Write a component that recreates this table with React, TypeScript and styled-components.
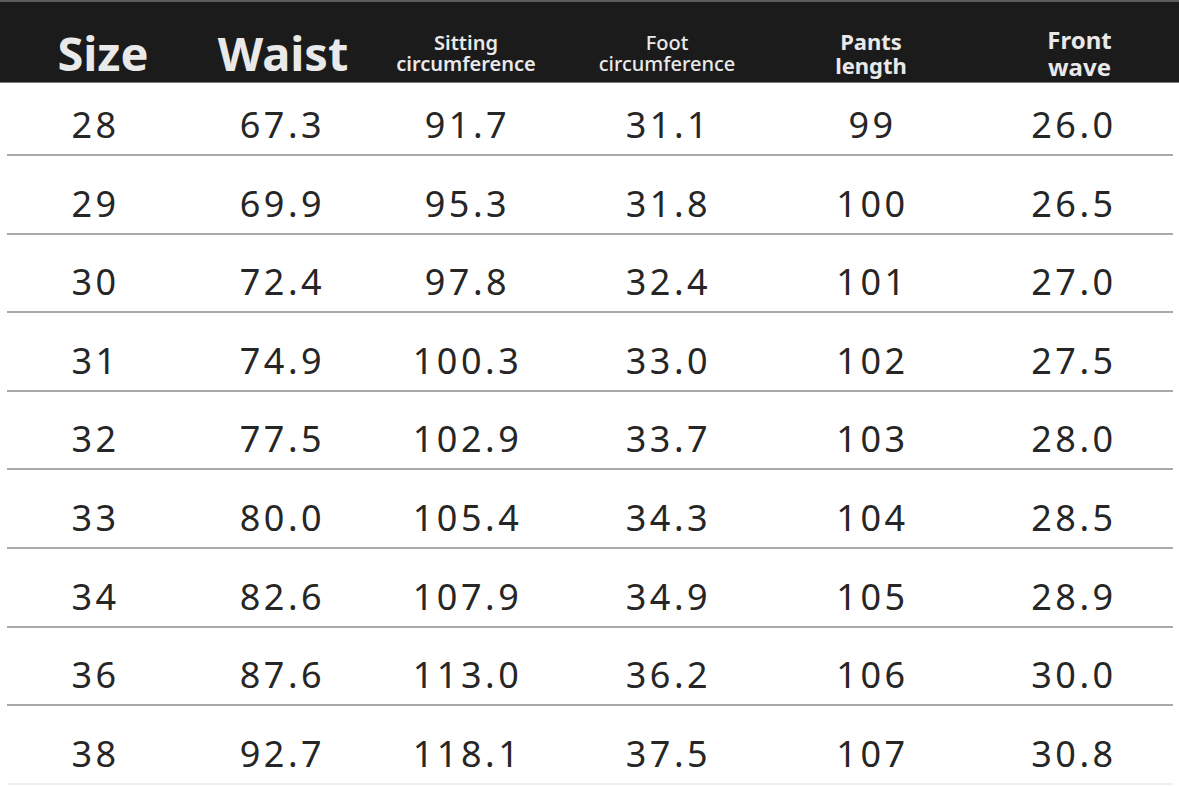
import React from 'react';
import styled, { createGlobalStyle } from 'styled-components';

const GlobalStyle = createGlobalStyle`
  html, body {
    margin: 0;
    padding: 0;
    background: #ffffff;
  }
  body {
    font-family: "Noto Sans", "Open Sans", sans-serif;
  }
`;

const COLUMNS = '188px 186px 184px 218px 190px 1fr';

const Chart = styled.div`
  width: 1179px;
  height: 786px;
  display: flex;
  flex-direction: column;
  overflow: hidden;
`;

const Header = styled.div`
  display: grid;
  grid-template-columns: ${COLUMNS};
  align-items: center;
  box-sizing: border-box;
  height: 83px;
  padding-top: 21px;
  background: #1b1b1b;
  border-top: 2px solid #5c5c5c;
  border-bottom: 1px solid #7a7a7a;
  color: #e9e9e9;
`;

const HeadCell = styled.div<{ $size: number; $lh: number; $weight: number; $shift?: number }>`
  text-align: center;
  font-size: ${(p) => p.$size}px;
  line-height: ${(p) => p.$lh}px;
  font-weight: ${(p) => p.$weight};
  transform: translateX(${(p) => p.$shift ?? 0}px);
`;

const Body = styled.div`
  display: flex;
  flex-direction: column;
`;

const Row = styled.div`
  display: flex;
  flex-direction: column;
  height: 78.6px;

  &:first-child {
    height: 73px;
  }
`;

const Cells = styled.div`
  flex: 1;
  display: grid;
  grid-template-columns: ${COLUMNS};
  align-items: end;
  padding-bottom: 11px;
`;

const Value = styled.div`
  text-align: center;
  padding-left: 3px;
  font-size: 36px;
  line-height: 36px;
  letter-spacing: 3.5px;
  color: #262626;
`;

const Rule = styled.div<{ $faint?: boolean }>`
  height: 2px;
  margin: 0 6px 0 7px;
  background: ${(p) => (p.$faint ? '#efefef' : '#a9a9a9')};
`;

const rows: string[][] = [
  ['28', '67.3', '91.7', '31.1', '99', '26.0'],
  ['29', '69.9', '95.3', '31.8', '100', '26.5'],
  ['30', '72.4', '97.8', '32.4', '101', '27.0'],
  ['31', '74.9', '100.3', '33.0', '102', '27.5'],
  ['32', '77.5', '102.9', '33.7', '103', '28.0'],
  ['33', '80.0', '105.4', '34.3', '104', '28.5'],
  ['34', '82.6', '107.9', '34.9', '105', '28.9'],
  ['36', '87.6', '113.0', '36.2', '106', '30.0'],
  ['38', '92.7', '118.1', '37.5', '107', '30.8'],
];

export default function App(): JSX.Element {
  return (
    <>
      <GlobalStyle />
      <Chart>
        <Header>
          <HeadCell $size={47} $lh={50} $weight={700} $shift={9}>Size</HeadCell>
          <HeadCell $size={47} $lh={50} $weight={700} $shift={2}>Waist</HeadCell>
          <HeadCell $size={20} $lh={21} $weight={600}>
            Sitting<br />circumference
          </HeadCell>
          <HeadCell $size={20} $lh={21} $weight={500}>
            Foot<br />circumference
          </HeadCell>
          <HeadCell $size={22} $lh={24} $weight={700}>
            Pants<br />length
          </HeadCell>
          <HeadCell $size={24} $lh={27} $weight={700} $shift={7}>
            Front<br />wave
          </HeadCell>
        </Header>
        <Body>
          {rows.map((r, idx) => (
            <Row key={r[0]}>
              <Cells>
                {r.map((v, i) => (
                  <Value key={i}>{v}</Value>
                ))}
              </Cells>
              <Rule $faint={idx === rows.length - 1} />
            </Row>
          ))}
        </Body>
      </Chart>
    </>
  );
}
